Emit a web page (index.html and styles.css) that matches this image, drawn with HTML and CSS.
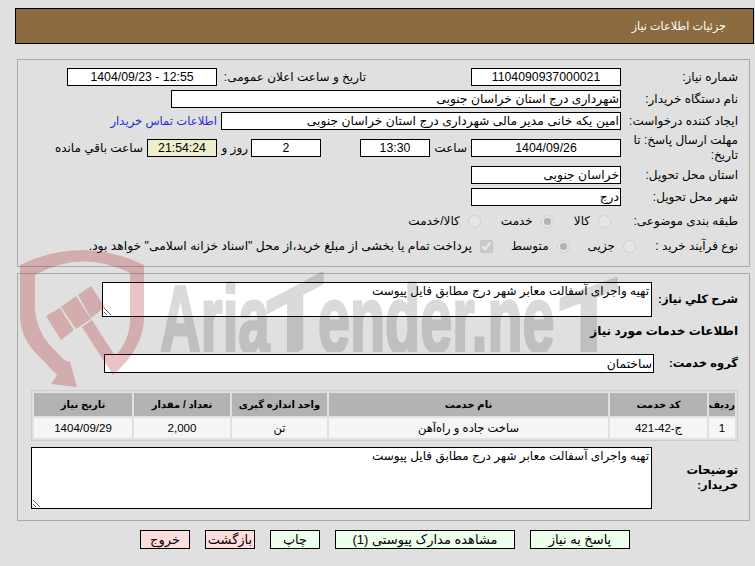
FILE: index.html
```html
<!DOCTYPE html>
<html lang="fa" dir="rtl">
<head>
<meta charset="utf-8">
<title>جزئیات اطلاعات نیاز</title>
<link rel="stylesheet" href="styles.css">
</head>
<body>
<header class="title-bar">جزئیات اطلاعات نیاز</header>

<section class="panel panel-top">
  <div class="row">
    <span class="label">شماره نیاز:</span>
    <input class="field w150 center" readonly value="1104090937000021">
    <span class="label-announce">تاریخ و ساعت اعلان عمومی:</span>
    <input class="field w150 center" dir="ltr" readonly value="1404/09/23 - 12:55">
  </div>
  <div class="row">
    <span class="label">نام دستگاه خریدار:</span>
    <input class="field w450" readonly value="شهرداری درج استان خراسان جنوبی">
  </div>
  <div class="row">
    <span class="label">ایجاد کننده درخواست:</span>
    <input class="field w400" readonly value="امین یکه خانی مدیر مالی شهرداری درج استان خراسان جنوبی">
    <a class="contact" href="#">اطلاعات تماس خریدار</a>
  </div>
  <div class="row row-deadline">
    <span class="label label-wrap">مهلت ارسال پاسخ: تا تاریخ:</span>
    <input class="field w150 center" readonly value="1404/09/26">
    <span class="t-hour">ساعت</span>
    <input class="field w70 center" readonly value="13:30">
    <input class="field w70 center days" readonly value="2">
    <span class="t-days">روز و</span>
    <input class="field w70 center timer" readonly value="21:54:24">
    <span class="t-left">ساعت باقي مانده</span>
  </div>
  <div class="row">
    <span class="label">استان محل تحویل:</span>
    <input class="field w150" readonly value="خراسان جنوبی">
  </div>
  <div class="row">
    <span class="label">شهر محل تحویل:</span>
    <input class="field w150" readonly value="درج">
  </div>
  <div class="row row-category">
    <span class="label">طبقه بندی موضوعی:</span>
    <div class="options opts-category">
      <label class="opt"><input class="radio" type="radio" name="cat" disabled>کالا</label>
      <label class="opt"><input class="radio" type="radio" name="cat" disabled checked>خدمت</label>
      <label class="opt"><input class="radio" type="radio" name="cat" disabled>کالا/خدمت</label>
    </div>
  </div>
  <div class="row row-process">
    <span class="label label-process">نوع فرآیند خرید :</span>
    <div class="options opts-process">
      <label class="opt"><input class="radio" type="radio" name="proc" disabled>جزیی</label>
      <label class="opt"><input class="radio" type="radio" name="proc" disabled checked>متوسط</label>
      <label class="opt opt-long"><input class="check" type="checkbox" disabled checked>پرداخت تمام یا بخشی از مبلغ خرید،از محل "اسناد خزانه اسلامی" خواهد بود.</label>
    </div>
  </div>
</section>

<section class="panel panel-bottom">
  <div class="row-area">
    <span class="label-b w86">شرح کلي نياز:</span>
    <textarea class="area area-short" readonly>تهیه واجرای آسفالت معابر شهر درج مطابق فایل پیوست</textarea>
  </div>
  <h2 class="subhead">اطلاعات خدمات مورد نياز</h2>
  <div class="row-group">
    <span class="label-b w84">گروه خدمت:</span>
    <input class="field w550 h19" readonly value="ساختمان">
  </div>
  <table class="grid">
    <thead>
      <tr>
        <th class="c1">ردیف</th>
        <th class="c2">کد خدمت</th>
        <th class="c3">نام خدمت</th>
        <th class="c4">واحد اندازه گیری</th>
        <th class="c5">تعداد / مقدار</th>
        <th class="c6">تاریخ نیاز</th>
      </tr>
    </thead>
    <tbody>
      <tr>
        <td>1</td>
        <td>ج-42-421</td>
        <td>ساخت جاده و راه‌آهن</td>
        <td>تن</td>
        <td>2,000</td>
        <td>1404/09/29</td>
      </tr>
    </tbody>
  </table>
  <div class="row-area row-notes">
    <span class="label-b w86">توضیحات خریدار:</span>
    <textarea class="area area-tall" readonly>تهیه واجرای آسفالت معابر شهر درج مطابق فایل پیوست</textarea>
  </div>
</section>

<nav class="actions">
  <button class="btn go b100" type="button">پاسخ به نیاز</button>
  <button class="btn go b180" type="button">مشاهده مدارک پیوستی (1)</button>
  <button class="btn go b50" type="button">چاپ</button>
  <button class="btn stop b50" type="button">بازگشت</button>
  <button class="btn stop b50" type="button">خروج</button>
</nav>

<svg class="watermark" viewBox="0 0 755 566" xmlns="http://www.w3.org/2000/svg">
  <defs>
    <clipPath id="wm-clip"><rect x="150" y="260" width="480" height="92"/></clipPath>
  </defs>
  <g class="wm-red">
    <path d="M20 265Q82 235 144 265L144 320Q142 350 113 375L82 327L92 320L115 356Q130 340 130 320L130 273Q82 249 35 275L35 310Q37 330 48 343L64 360L70 362L77 387L51 384L57 375L33 350Q20 335 20 315Z"/>
    <path d="M46 316L60 308L74 330L61 340Z"/>
    <path d="M61 307L76 296L91 319L76 329Z"/>
    <path d="M78 295L91 286L105 307L91 318Z"/>
  </g>
  <g class="wm-text" clip-path="url(#wm-clip)">
    <text transform="translate(160 352) scale(.6 1)">Aria</text>
    <text transform="translate(318 352) scale(.612 1)">ender.ne</text>
    <text transform="translate(295 286) skewY(-28) translate(-28 66) scale(.98 1)">T</text>
    <text transform="translate(592 286) skewY(-20) translate(-32 66)">T</text>
  </g>
</svg>
</body>
</html>
```

FILE: styles.css
```css
html, body { margin: 0; padding: 0; }
body {
  position: relative;
  width: 755px;
  height: 566px;
  overflow: hidden;
  background: #e0e0e0;
  color: #000;
  font: 12px "Liberation Sans", "DejaVu Sans", sans-serif;
}
.title-bar {
  box-sizing: border-box;
  height: 36px;
  margin: 8px 1px 0 15px;
  padding-right: 27px;
  border: 1px solid #000;
  background: #8b6b3f;
  color: #fff;
  font-size: 11.2px;
  line-height: 34px;
}
.panel {
  box-sizing: border-box;
  margin-left: 17px;
  margin-right: 5px;
  border: 1px solid #aaa;
  padding: 8px 11px 0 0;
}
.panel-top { height: 208px; margin-top: 15px; display: flex; flex-direction: column; gap: 4px; }
.panel-bottom { height: 248px; margin-top: 6px; }
.row { display: flex; align-items: center; height: 18px; flex: none; white-space: nowrap; }
.row-deadline { margin: 5px 0; }
.row-category { margin-top: 2px; }
.row-process { margin-top: 3px; }
.label { flex: none; width: 117px; }
.label-wrap { white-space: normal; line-height: 15px; }
.label-process { width: 102px; }
.label-announce { flex: none; width: 149px; padding-right: 105px; }
.field {
  flex: none;
  box-sizing: border-box;
  height: 18px;
  margin: 0;
  padding: 0 1px;
  border: 1px solid #000;
  border-radius: 0;
  outline: 0;
  background: #fff;
  color: #000;
  font: inherit;
  font-size: 12.3px;
}
.center { text-align: center; }
.w70 { width: 70px; }
.w150 { width: 150px; }
.w400 { width: 400px; }
.w450 { width: 450px; }
.w550 { width: 550px; }
.h19 { height: 19px; }
.timer { background: #eeeecc; }
.days { margin-right: 39px; }
.contact { margin-right: 4px; color: #2a2ad8; text-decoration: none; font-size: 11.6px; }
.t-hour { width: 33px; margin: 0 4px; }
.t-days { width: 31px; padding-right: 3px; }
.t-left { margin-right: 4px; }
.options { display: flex; align-items: center; }
.opts-category { margin-right: 10px; gap: 20px; }
.opts-process { gap: 18px; }
.opt { display: flex; align-items: center; gap: 8px; }
.opt-long { font-size: 12.3px; }
.radio {
  appearance: none;
  box-sizing: border-box;
  width: 13px;
  height: 13px;
  margin: 0;
  border: 1px solid #cfcfcf;
  border-radius: 50%;
  background: #e6e6e6;
}
.radio:checked { background: radial-gradient(circle, #b5b5b5 0 3.5px, #e6e6e6 4px); }
.check { width: 13px; height: 13px; margin: 0; }
.row-area { display: flex; align-items: center; }
.label-b { flex: none; font-weight: bold; font-size: 11.5px; line-height: 15px; }
.w86 { width: 86px; }
.w84 { width: 84px; }
.area {
  box-sizing: border-box;
  display: block;
  margin: 0;
  padding: 1px 2px;
  border: 1px solid #000;
  border-radius: 0;
  outline: 0;
  background: #fff;
  color: #000;
  font: inherit;
}
.area-short { width: 550px; height: 35px; }
.area-tall { width: 621px; height: 62px; }
.subhead { margin: 6px 0 0; height: 17px; font-size: 12px; line-height: 17px; font-weight: bold; }
.row-group { display: flex; align-items: center; margin-top: 14px; }
.grid {
  box-sizing: border-box;
  width: 707px;
  margin-top: 17px;
  table-layout: fixed;
  border: 1px solid #ccc;
  border-spacing: 2px;
  font-size: 11.5px;
}
.grid th { height: 23px; padding: 0; background: #b3b3b3; font-size: 10px; white-space: nowrap; }
.grid td { height: 20px; padding: 0; background: #f5f5f5; text-align: center; }
.c1 { width: 26px; }
.c2 { width: 97px; }
.c3 { width: 279px; }
.c4 { width: 95px; }
.c5 { width: 96px; }
.c6 { width: 98px; }
.row-notes { margin-top: 6px; }
.actions {
  display: flex;
  gap: 15px;
  margin-top: 9px;
  padding-right: 125px;
}
.btn {
  box-sizing: border-box;
  height: 19px;
  margin: 0;
  padding: 0;
  border: 1px solid #000;
  border-radius: 0;
  color: #000;
  font: inherit;
  font-size: 13px;
}
.go { background: #eeffee; }
.stop { background: #ffdddd; }
.b50 { width: 50px; }
.b100 { width: 100px; }
.b180 { width: 180px; }
.watermark {
  position: absolute;
  left: 0;
  top: 0;
  width: 755px;
  height: 566px;
  pointer-events: none;
}
.wm-red { fill: rgba(170, 20, 20, 0.25); }
.wm-text {
  direction: ltr;
  fill: #000;
  stroke: #000;
  stroke-width: 3px;
  stroke-linejoin: round;
  opacity: 0.14;
  font: 700 94px "Liberation Sans", sans-serif;
}
```
